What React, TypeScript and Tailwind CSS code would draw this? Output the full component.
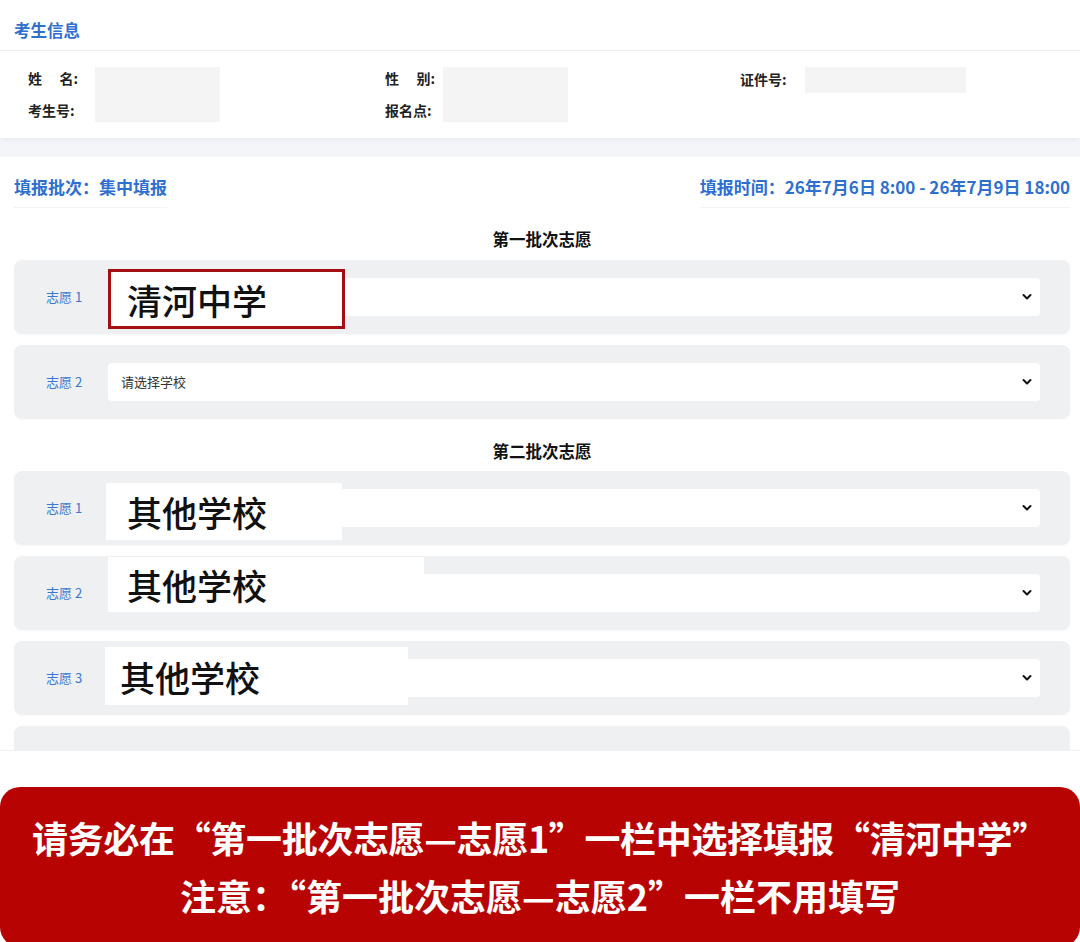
import React from 'react';

const FONT = '"Noto Sans CJK SC", "Noto Sans", sans-serif';

type Pick = {
  label: string;
  overlay?: { text: string; box: string; text2: string };
};

const FIRST: Pick[] = [
  {
    label: '志愿 1',
    overlay: {
      text: '清河中学',
      box: 'top-[9px] left-[94px] w-[237px] h-[60px] border-[3px] border-[#a30f12]',
      text2: 'pl-[16px]',
    },
  },
  { label: '志愿 2' },
];

const SECOND: Pick[] = [
  {
    label: '志愿 1',
    overlay: { text: '其他学校', box: 'top-[12px] left-[92px] w-[236px] h-[57px]', text2: 'pl-[21px]' },
  },
  {
    label: '志愿 2',
    overlay: { text: '其他学校', box: 'top-[1px] left-[94px] w-[316px] h-[55px]', text2: 'pl-[19px]' },
  },
  {
    label: '志愿 3',
    overlay: { text: '其他学校', box: 'top-[6px] left-[91px] w-[303px] h-[58px]', text2: 'pl-[15px]' },
  },
];

function Chevron() {
  return (
    <svg width="10" height="7" viewBox="0 0 10 7" className="absolute right-[8px] top-1/2 -translate-y-1/2">
      <path d="M1.5 1.5 L5 5 L8.5 1.5" fill="none" stroke="#111" strokeWidth="2" strokeLinecap="round" strokeLinejoin="round" />
    </svg>
  );
}

function Row({ item, placeholder }: { item: Pick; placeholder?: boolean }) {
  return (
    <div className="relative h-[74px] shrink-0 rounded-[8px] bg-[#eff0f2] flex items-center pl-[32px] pr-[30px] shadow-[0_1px_2px_rgba(0,0,0,0.03)]">
      <span className="w-[62px] text-[13px] text-[#3a78d0]">{item.label}</span>
      <div className="relative flex-1 h-[38px] rounded-[4px] bg-white flex items-center pl-[13px]">
        {placeholder && <span className="text-[13px] text-[#333]">请选择学校</span>}
        <Chevron />
      </div>
      {item.overlay && (
        <div className={`absolute bg-white flex items-center ${item.overlay.box}`}>
          <span className={`text-[35px] font-medium text-[#111] leading-none ${item.overlay.text2}`}>
            {item.overlay.text}
          </span>
        </div>
      )}
    </div>
  );
}

export default function App() {
  return (
    <div className="w-[1080px] h-[942px] bg-white overflow-hidden" style={{ fontFamily: FONT }}>
      <div className="h-[751px] overflow-hidden bg-[#f3f5f8] border-b border-[#f0f1f3]">
        {/* 考生信息 */}
        <div className="bg-white shadow-[0_2px_6px_rgba(0,0,0,0.05)]">
          <div className="h-[51px] pt-[20px] pl-[14px] border-b border-[#eef1f4]">
            <h2 className="text-[16.5px] leading-[20px] font-bold text-[#2d70cf]">考生信息</h2>
          </div>
          <div className="flex pt-[11px] pb-[12px] pl-[28px] text-[14px] font-semibold text-[#222]">
            <div className="flex w-[357px]">
              <div className="w-[67px] flex flex-col">
                <div className="h-[32px] leading-[32px] flex w-[50px] justify-between">
                  <span>姓</span>
                  <span>名:</span>
                </div>
                <div className="h-[32px] leading-[32px]">考生号:</div>
              </div>
              <div className="mt-[5px] w-[125px] h-[55px] bg-[#f4f4f4]" />
            </div>
            <div className="flex w-[355px]">
              <div className="w-[58px] flex flex-col">
                <div className="h-[32px] leading-[32px] flex w-[50px] justify-between">
                  <span>性</span>
                  <span>别:</span>
                </div>
                <div className="h-[32px] leading-[32px]">报名点:</div>
              </div>
              <div className="mt-[5px] w-[125px] h-[55px] bg-[#f4f4f4]" />
            </div>
            <div className="flex">
              <div className="w-[65px] h-[32px] leading-[34px]">证件号:</div>
              <div className="mt-[5px] w-[161px] h-[26px] bg-[#f4f4f4]" />
            </div>
          </div>
        </div>

        {/* 志愿填报 */}
        <div className="mt-[19px] bg-white h-[600px] px-[14px] pr-[10px]">
          <div className="flex justify-between pt-[19px] text-[17px] leading-[22px] font-bold text-[#2d70cf]">
            <span className="pb-[9px] border-b border-[#f2f3f5]">填报批次：集中填报</span>
            <span className="pb-[9px] border-b border-[#f2f3f5]">填报时间：26年7月6日 8:00 - 26年7月9日 18:00</span>
          </div>
          <div className="mt-[20px] h-[22px] leading-[22px] text-center text-[16.5px] font-bold text-[#111]">第一批次志愿</div>
          <div className="mt-[10px] flex flex-col gap-[11px]">
            <Row item={FIRST[0]} />
            <Row item={FIRST[1]} placeholder />
          </div>
          <div className="mt-[21px] h-[22px] leading-[22px] text-center text-[16.5px] font-bold text-[#111]">第二批次志愿</div>
          <div className="mt-[9px] flex flex-col gap-[11px]">
            {SECOND.map((s) => (
              <Row key={s.label} item={s} />
            ))}
            {/* 下一行只露出顶部 */}
            <div className="h-[74px] shrink-0 rounded-[8px] bg-[#eff0f2]" />
          </div>
        </div>
      </div>

      {/* 提示 */}
      <div className="mt-[36px] h-[160px] rounded-[20px] bg-[#b80303] flex flex-col items-center pt-[27px] text-white font-bold text-[36px] leading-[46px]">
        <p className="tracking-[-0.35px]">请务必在“第一批次志愿—志愿1”一栏中选择填报“清河中学”</p>
        <p className="mt-[12px]">注意：“第一批次志愿—志愿2”一栏不用填写</p>
      </div>
    </div>
  );
}
